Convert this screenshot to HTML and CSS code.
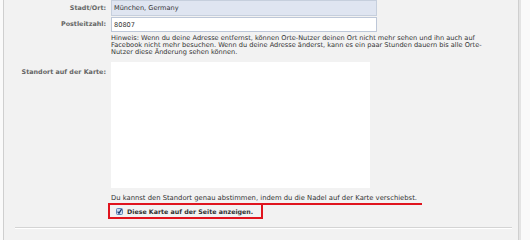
FILE: index.html
```html
<!DOCTYPE html>
<html lang="de">
<head>
    <meta charset="UTF-8">
    <meta name="viewport" content="width=device-width, initial-scale=1.0">
    <title>Standort bearbeiten</title>
    <link rel="stylesheet" href="styles.css">
</head>
<body>
    <div class="panel">
        <div class="form-row">
            <label class="form-label row-tall">Stadt/Ort:</label>
            <div class="form-field">
                <input class="text-input filled" type="text" value="München, Germany">
            </div>
        </div>

        <div class="form-row row-zip">
            <label class="form-label row-short">Postleitzahl:</label>
            <div class="form-field">
                <input class="text-input short" type="text" value="80807">
                <p class="hint">Hinweis: Wenn du deine Adresse entfernst, können Orte-Nutzer deinen Ort nicht mehr sehen und ihn auch auf Facebook nicht mehr besuchen. Wenn du deine Adresse änderst, kann es ein paar Stunden dauern bis alle Orte-Nutzer diese Änderung sehen können.</p>
            </div>
        </div>

        <div class="form-row">
            <label class="form-label map-label">Standort auf der Karte:</label>
            <div class="form-field map-field">
                <div class="map"></div>
                <p class="map-note">Du kannst den Standort genau abstimmen, indem du die Nadel auf der Karte verschiebst.</p>
                <label class="check">
                    <svg class="checkbox" width="7" height="7" viewBox="0 0 7 7">
                        <rect x="0.5" y="0.5" width="6" height="6" rx="1" fill="#c9dcf3" stroke="#5f84b8"/>
                        <path d="M1.6 3.6 L3 5.2 L5.6 1.2" fill="none" stroke="#17386d" stroke-width="1.2"/>
                    </svg>
                    Diese Karte auf der Seite anzeigen.
                </label>
                <!-- red annotations drawn over the form -->
                <span class="mark-line"></span>
                <span class="mark-box"></span>
            </div>
        </div>

        <hr class="divider">
    </div>
</body>
</html>
```

FILE: styles.css
```css
body {
    margin: 0;
    background: #fafafa;
    font-family: "DejaVu Sans", Verdana, sans-serif;
    font-size: 6.6px;
    color: #333;
}
.panel {
    width: 514px;
    height: 240px;
    margin-left: 3px;
    background: #f2f2f2;
    border-left: 1px solid #cfcfcf;
    border-right: 1px solid #cfcfcf;
    box-shadow: 2px 0 0 #e4e4e4;
    overflow: hidden;
}
.form-row {
    display: grid;
    grid-template-columns: 102px 1fr;
    column-gap: 5px;
}
.row-zip {
    margin-top: 1px;
}
.form-label {
    text-align: right;
    font-size: 6.4px;
    font-weight: bold;
    color: #666;
}
.row-tall {
    line-height: 16px;
}
.row-short {
    line-height: 15px;
}
.map-label {
    padding-top: 7px;
    line-height: 7px;
}
.form-field {
    position: relative;
}
.text-input {
    display: block;
    box-sizing: border-box;
    width: 266px;
    height: 16px;
    margin: 0;
    padding: 0 2px;
    border: 1px solid #bdc7d8;
    background: #fff;
    font-family: inherit;
    font-size: 6.6px;
    color: #333;
}
.text-input.filled {
    background: #dfe5f1;
    border-color: #c6cfdd;
}
.text-input.short {
    height: 15px;
}
.hint {
    width: 376px;
    margin: 3px 0 6px;
    line-height: 7px;
}
.map {
    width: 259px;
    height: 126px;
    background: #fff;
}
.map-note {
    margin: 7px 0 0;
    font-size: 6.8px;
    line-height: 7px;
}
.check {
    display: flex;
    align-items: center;
    gap: 4px;
    margin: 6px 0 0 5px;
    font-size: 6.3px;
    line-height: 7px;
    font-weight: bold;
    color: #333;
}
.checkbox {
    display: block;
}
.mark-line {
    position: absolute;
    left: -3px;
    top: 141px;
    width: 314px;
    height: 2px;
    background: #e0141e;
}
.mark-box {
    position: absolute;
    left: -3px;
    top: 141px;
    width: 151px;
    height: 12px;
    border: 2px solid #e0141e;
}
.divider {
    width: 497px;
    margin: 12px 0 0 11px;
    border: 0;
    border-top: 1px solid #d4d4d4;
    border-bottom: 1px solid #fff;
}
```
